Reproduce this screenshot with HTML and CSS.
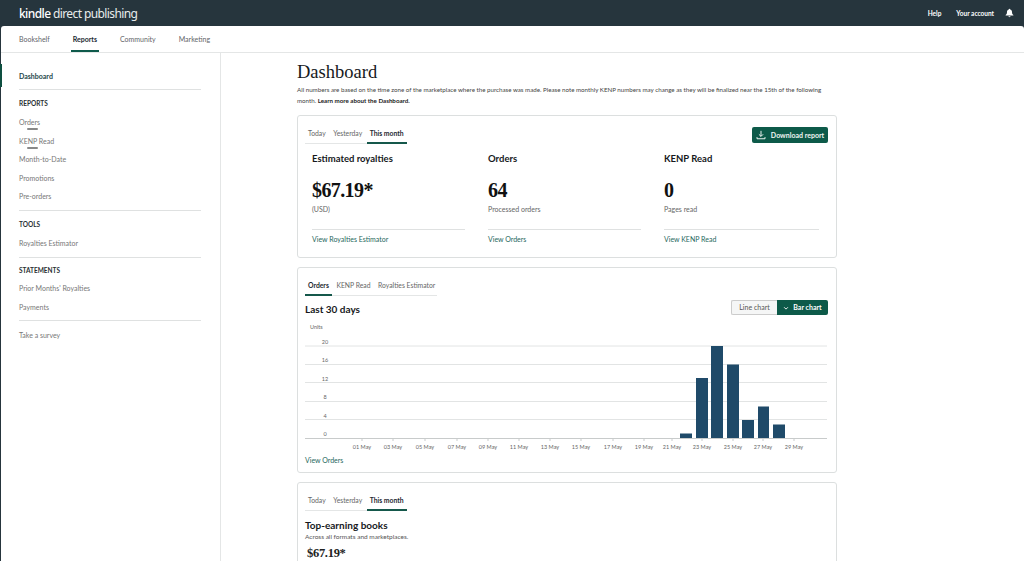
FILE: index.html
```html
<!DOCTYPE html>
<html lang="en">
<head>
    <meta charset="UTF-8">
    <meta name="viewport" content="width=device-width, initial-scale=1.0">
    <title>Dashboard</title>
    <link rel="stylesheet" href="styles.css">
</head>
<body>

<header class="topbar">
    <div class="logo"><b>kindle</b> direct publishing</div>
    <div class="top-links">
        <span>Help</span>
        <span>Your account</span>
        <svg class="bell" viewBox="0 0 10 10" width="9" height="10"><path d="M5 0.4c.5 0 .8.3.8.8 1.5.4 2 1.6 2 3 0 1.600.6 2.300 1.500 3v.7H.7V7.200c.9-.7 1.500-1.400 1.500-3 0-1.400.5-2.600 2-3 0-.5.3-.8.8-.8zM3.900 8.600h2.200c0 .6-.5 1-1.100 1s-1.100-.4-1.100-1z" fill="#fff"/></svg>
    </div>
</header>

<div class="page">
    <nav class="tabs-main">
        <a>Bookshelf</a>
        <a class="active">Reports</a>
        <a>Community</a>
        <a>Marketing</a>
    </nav>

    <div class="columns">
        <aside class="sidebar">
            <div class="side-group first">
                <a class="side-link current">Dashboard</a>
            </div>
            <div class="side-group">
                <h4>REPORTS</h4>
                <a class="side-link">Orders<i class="smudge"></i></a>
                <a class="side-link">KENP Read<i class="smudge"></i></a>
                <a class="side-link">Month-to-Date</a>
                <a class="side-link">Promotions</a>
                <a class="side-link">Pre-orders</a>
            </div>
            <div class="side-group">
                <h4>TOOLS</h4>
                <a class="side-link">Royalties Estimator</a>
            </div>
            <div class="side-group statements">
                <h4>STATEMENTS</h4>
                <a class="side-link">Prior Months' Royalties</a>
                <a class="side-link">Payments</a>
            </div>
            <div class="side-group last">
                <a class="side-link">Take a survey</a>
            </div>
        </aside>

        <main class="content">
            <h1>Dashboard</h1>
            <p class="intro">All numbers are based on the time zone of the marketplace where the purchase was made. Please note monthly KENP numbers may change as they will be finalized near the 15th of the following<br>month. <b>Learn more about the Dashboard.</b></p>

            <section class="card card-summary">
                <div class="card-top">
                    <div class="tabs tabs-range">
                        <a>Today</a>
                        <a>Yesterday</a>
                        <a class="active">This month</a>
                    </div>
                    <button class="btn-download">
                        <svg viewBox="0 0 12 12" width="10" height="10"><path d="M6 1v6.500M3.500 5.200 6 7.700l2.500-2.500M1.200 8.500v2h9.600v-2" fill="none" stroke="#fff" stroke-width="1.100"/></svg>
                        Download report
                    </button>
                </div>
                <div class="stats">
                    <div class="stat">
                        <h3>Estimated royalties</h3>
                        <div class="num">$67.19*</div>
                        <div class="sub">(USD)</div>
                        <a class="view">View Royalties Estimator</a>
                    </div>
                    <div class="stat">
                        <h3>Orders</h3>
                        <div class="num">64</div>
                        <div class="sub">Processed orders</div>
                        <a class="view">View Orders</a>
                    </div>
                    <div class="stat">
                        <h3>KENP Read</h3>
                        <div class="num">0</div>
                        <div class="sub">Pages read</div>
                        <a class="view">View KENP Read</a>
                    </div>
                </div>
            </section>

            <section class="card card-chart">
                <div class="tabs tabs-chart">
                    <a class="active">Orders</a>
                    <a>KENP Read</a>
                    <a>Royalties Estimator</a>
                </div>
                <div class="chart-head">
                    <h3>Last 30 days</h3>
                    <div class="toggle">
                        <span class="toggle-off">Line chart</span>
                        <span class="toggle-on">
                            <svg viewBox="0 0 8 8" width="6" height="6"><path d="M1.500 3 4 5.500 6.500 3" fill="none" stroke="#fff" stroke-width="1.200"/></svg>
                            Bar chart
                        </span>
                    </div>
                </div>
                <svg class="chart" width="522" height="130" viewBox="0 0 522 130">
                    <g class="axis-y">
                        <text x="5" y="7">Units</text>
                        <text x="20" y="21.500" text-anchor="middle">20</text>
                        <text x="20" y="40" text-anchor="middle">16</text>
                        <text x="20" y="58.500" text-anchor="middle">12</text>
                        <text x="20" y="77" text-anchor="middle">8</text>
                        <text x="20" y="95.500" text-anchor="middle">4</text>
                        <text x="20" y="114" text-anchor="middle">0</text>
                    </g>
                    <g class="grid">
                        <line x1="0" x2="522" y1="24" y2="24"/>
                        <line x1="0" x2="522" y1="42.500" y2="42.500"/>
                        <line x1="0" x2="522" y1="60.500" y2="60.500"/>
                        <line x1="0" x2="522" y1="79.500" y2="79.500"/>
                        <line x1="0" x2="522" y1="97.500" y2="97.500"/>
                        <line class="base" x1="0" x2="522" y1="116.500" y2="116.500"/>
                    </g>
                    <g class="bars">
                        <rect x="375" y="111.500" width="12" height="4.500"/>
                        <rect x="391" y="56" width="12" height="60"/>
                        <rect x="406" y="24" width="12" height="92"/>
                        <rect x="422" y="42.500" width="12" height="73.500"/>
                        <rect x="437" y="98" width="12" height="18"/>
                        <rect x="453" y="84.500" width="11" height="31.500"/>
                        <rect x="468" y="102.500" width="12" height="13.500"/>
                    </g>
                    <g class="ticks">
                        <line x1="57" x2="57" y1="117" y2="119"/>
                        <line x1="88" x2="88" y1="117" y2="119"/>
                        <line x1="120" x2="120" y1="117" y2="119"/>
                        <line x1="152" x2="152" y1="117" y2="119"/>
                        <line x1="183" x2="183" y1="117" y2="119"/>
                        <line x1="214" x2="214" y1="117" y2="119"/>
                        <line x1="245" x2="245" y1="117" y2="119"/>
                        <line x1="276" x2="276" y1="117" y2="119"/>
                        <line x1="308" x2="308" y1="117" y2="119"/>
                        <line x1="339" x2="339" y1="117" y2="119"/>
                        <line x1="367" x2="367" y1="117" y2="119"/>
                        <line x1="397" x2="397" y1="117" y2="119"/>
                        <line x1="428" x2="428" y1="117" y2="119"/>
                        <line x1="458" x2="458" y1="117" y2="119"/>
                        <line x1="489" x2="489" y1="117" y2="119"/>
                    </g>
                    <g class="axis-x" text-anchor="middle">
                        <text x="57" y="127">01 May</text>
                        <text x="88" y="127">03 May</text>
                        <text x="120" y="127">05 May</text>
                        <text x="152" y="127">07 May</text>
                        <text x="183" y="127">09 May</text>
                        <text x="214" y="127">11 May</text>
                        <text x="245" y="127">13 May</text>
                        <text x="276" y="127">15 May</text>
                        <text x="308" y="127">17 May</text>
                        <text x="339" y="127">19 May</text>
                        <text x="367" y="127">21 May</text>
                        <text x="397" y="127">23 May</text>
                        <text x="428" y="127">25 May</text>
                        <text x="458" y="127">27 May</text>
                        <text x="489" y="127">29 May</text>
                    </g>
                </svg>
                <a class="view view-orders">View Orders</a>
            </section>

            <section class="card card-books">
                <div class="tabs tabs-range">
                    <a>Today</a>
                    <a>Yesterday</a>
                    <a class="active">This month</a>
                </div>
                <h3>Top-earning books</h3>
                <p class="note">Across all formats and marketplaces.</p>
                <div class="num-small">$67.19*</div>
            </section>
        </main>
    </div>
</div>

</body>
</html>
```

FILE: styles.css
```css
body {
    margin: 0;
    height: 561px;
    overflow: hidden;
    background-color: #26353d;
    font-family: Lato, "Noto Sans", Arial, sans-serif;
    font-size: 7px;
    color: #555;
}
h1, h3, h4, p {
    margin: 0;
}
.topbar {
    height: 26px;
    padding: 0 10px 0 19px;
    display: flex;
    justify-content: space-between;
    align-items: center;
}
.logo {
    font-family: "Noto Sans", sans-serif;
    font-size: 12px;
    letter-spacing: -0.6px;
    color: #e8ecec;
}
.logo b {
    font-weight: 500;
    color: #fff;
}
.top-links {
    display: flex;
    align-items: center;
    gap: 15px;
    color: #fff;
    font-size: 6.500px;
    font-weight: 700;
}
.bell {
    margin-left: -4px;
}
.page {
    margin-left: 1px;
    height: 535px;
    background-color: #fff;
    border-radius: 3px 3px 0 0;
}
.tabs-main {
    height: 26px;
    padding-left: 18px;
    display: flex;
    gap: 23px;
    border-bottom: 1px solid #e4e6e6;
}
.tabs-main a {
    line-height: 27px;
    color: #5f6468;
    position: relative;
}
.tabs-main a.active {
    color: #1c2b33;
    font-weight: 700;
}
.tabs-main a.active::after {
    content: "";
    position: absolute;
    left: -2px;
    right: -2px;
    bottom: 0;
    height: 2px;
    background-color: #0e5a4b;
}
.columns {
    display: flex;
    height: 508px;
}
.sidebar {
    flex-shrink: 0;
    border-right: 1px solid #e4e6e6;
    padding: 14px 19px 0 18px;
    width: 182px;
}
.side-group {
    border-bottom: 1px solid #dfe1e1;
    padding-bottom: 4px;
}
.side-group.first {
    padding-bottom: 0;
    height: 22px;
}
.side-group.last {
    border-bottom: none;
    padding-top: 5px;
}
.side-group h4 {
    font-size: 6.500px;
    font-weight: 700;
    color: #2a2f33;
    line-height: 10px;
    padding-top: 9px;
    margin-bottom: 4px;
}
.side-group.statements h4 {
    padding-top: 8px;
    margin-bottom: 3.500px;
}
.side-link {
    display: block;
    height: 18.600px;
    line-height: 18.600px;
    color: #777;
    position: relative;
}
.current {
    color: #26474a;
    font-weight: 700;
}
.current::before {
    content: "";
    position: absolute;
    left: -19px;
    top: -3px;
    width: 2px;
    height: 23px;
    background-color: #0e4f40;
}
.smudge {
    position: absolute;
    left: 8px;
    top: 15px;
    width: 11px;
    height: 2px;
    background-color: #888;
    border-radius: 2px;
    filter: blur(0.6px);
}
.content {
    width: 540px;
    margin-left: 76px;
}
h1 {
    font-family: "Liberation Serif", serif;
    font-weight: 400;
    font-size: 18.500px;
    line-height: 22px;
    color: #16191c;
    margin-top: 8px;
}
.intro {
    font-size: 6.200px;
    line-height: 11px;
    margin-top: 1px;
    width: 530px;
    color: #444;
}
.intro b {
    color: #222;
}
.card {
    box-sizing: border-box;
    width: 540px;
    border: 1px solid #dcdfdf;
    border-radius: 3px;
    background-color: #fff;
}
.card-summary {
    height: 143px;
    margin-top: 9px;
    padding: 11px 8px 0 7px;
}
.card-top {
    display: flex;
    justify-content: space-between;
    align-items: flex-start;
}
.tabs {
    display: flex;
    height: 17px;
    border-bottom: 1px solid #e4e6e6;
    box-sizing: border-box;
    white-space: nowrap;
    font-size: 6.800px;
}
.tabs a {
    padding: 0 3px;
    line-height: 13px;
    color: #666;
    position: relative;
    margin-right: 1.500px;
}
.tabs a:last-child {
    margin-right: 0;
}
.tabs a.active {
    color: #1d2a30;
    font-weight: 700;
}
.tabs a.active::after {
    content: "";
    position: absolute;
    left: 0;
    right: 0;
    bottom: -1px;
    height: 2px;
    background-color: #15584b;
}
.btn-download {
    height: 16px;
    width: 76px;
    padding: 0;
    border: none;
    border-radius: 2px;
    background-color: #0d5a49;
    color: #f0f5f3;
    font-family: inherit;
    font-size: 7px;
    font-weight: 700;
    display: flex;
    align-items: center;
    justify-content: center;
    gap: 5px;
    white-space: nowrap;
}
.stats {
    display: flex;
    gap: 23px;
    padding-left: 7px;
    margin-top: -1px;
}
.stat {
    width: 153px;
}
.stat:nth-child(3) {
    width: 155px;
}
.stat h3 {
    font-size: 9.500px;
    font-weight: 700;
    color: #16191c;
    line-height: 12px;
    margin-top: 10px;
}
.num {
    font-family: "Liberation Serif", serif;
    font-weight: 700;
    font-size: 20px;
    letter-spacing: -0.6px;
    line-height: 24px;
    color: #111;
    margin-top: 13px;
}
.sub {
    line-height: 10px;
    margin-top: 2px;
    color: #666;
    padding-bottom: 15px;
    border-bottom: 1px solid #dfe1e1;
}
.view {
    display: block;
    color: #26685c;
    line-height: 10px;
    margin-top: 4px;
}
.card-chart {
    height: 206px;
    margin-top: 9px;
    padding: 11px 8px 0 7px;
}
.tabs-chart {
    width: 132px;
}
.chart-head {
    display: flex;
    justify-content: space-between;
    align-items: flex-start;
    margin-top: 5px;
}
.chart-head h3 {
    font-size: 10px;
    font-weight: 700;
    color: #16191c;
    line-height: 14px;
    margin-top: 1px;
}
.toggle {
    display: flex;
    height: 15px;
    line-height: 15px;
    margin-top: -1px;
}
.toggle-off {
    width: 46px;
    box-sizing: border-box;
    text-align: center;
    background-color: #f5f6f6;
    border: 1px solid #ccc;
    border-right: none;
    border-radius: 2px 0 0 2px;
    line-height: 13px;
}
.toggle-on {
    width: 51px;
    background-color: #0d5a49;
    color: #fff;
    font-weight: 700;
    border-radius: 0 2px 2px 0;
    display: flex;
    align-items: center;
    justify-content: center;
    gap: 4px;
}
.chart {
    display: block;
    margin-top: 6px;
}
.chart text {
    font-size: 5.500px;
    fill: #666;
}
.grid line {
    stroke: #e2e4e4;
    stroke-width: 1;
}
.grid line.base {
    stroke: #c8cbcb;
}
.ticks line {
    stroke: #c8cbcb;
    stroke-width: 1;
}
.bars rect {
    fill: #1f4a69;
}
.view-orders {
    margin-top: 3px;
}
.card-books {
    height: 100px;
    margin-top: 9px;
    padding: 11px 8px 0 7px;
}
.card-books .tabs {
    width: 102px;
}
.card-books h3 {
    font-size: 10px;
    font-weight: 700;
    color: #16191c;
    line-height: 12px;
    margin-top: 8px;
}
.note {
    font-size: 6.500px;
    line-height: 10px;
    margin-top: 1px;
    color: #555;
}
.num-small {
    font-family: "Liberation Serif", serif;
    font-weight: 700;
    font-size: 12.500px;
    letter-spacing: -0.3px;
    line-height: 14px;
    color: #222;
    margin: 4px 0 0 2px;
}
```
